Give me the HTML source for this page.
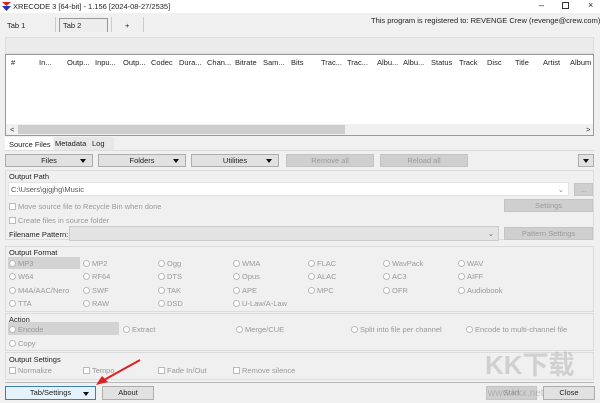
<!DOCTYPE html><html><head><style>
*{margin:0;padding:0;box-sizing:border-box}
body{width:600px;height:403px;background:#f0f0f0;font-family:"Liberation Sans",sans-serif;font-size:7.5px;color:#222;position:relative;overflow:hidden}
.a{position:absolute;white-space:nowrap}
.btn{position:absolute;background:#e1e1e1;border:1px solid #adadad;text-align:center;line-height:11px}
.dis{background:#cfcfcf;border-color:#c4c4c4;color:#9a9a9a}
.grp{position:absolute;border:1px solid #dcdcdc;left:5px;width:589px}
.r{display:inline-block;width:7px;height:7px;border:1px solid #bbb;border-radius:50%;background:#fff;vertical-align:-1px;margin-right:2px}
.c{display:inline-block;width:7px;height:7px;border:1px solid #bbb;background:#fff;vertical-align:-1px;margin-right:2px}
.g{color:#999}
.tri{display:inline-block;border-left:3.5px solid transparent;border-right:3.5px solid transparent;border-top:4px solid #111;vertical-align:1px}
</style></head><body>
<div class="a" style="left:0;top:0;width:600px;height:13px;background:#fff"></div>
<svg class="a" style="left:2px;top:2px" width="9" height="9"><path d="M0 0h9L4.5 4z" fill="#d22"/><path d="M0 4h9L4.5 9z" fill="#23b"/></svg>
<div class="a" style="left:13px;top:2px">XRECODE 3 [64-bit] - 1.156 [2024-08-27/2535]</div>
<div class="a" style="left:539px;top:0px;font-size:9px">–</div>
<div class="a" style="left:562px;top:2px;width:7px;height:7px;border:1px solid #333"></div>
<div class="a" style="left:588px;top:0px;font-size:9px">×</div>
<div class="a" style="left:0;top:13px;width:600px;height:22px;background:#f0f0f0"></div>
<div class="a" style="left:7px;top:21px">Tab 1</div>
<div class="a" style="left:55px;top:17px;width:1px;height:15px;background:#ccc"></div>
<div class="a" style="left:59px;top:18px;width:49px;height:14px;border:1px solid #999;border-bottom:none;background:#ededed;padding:2px 3px">Tab 2</div>
<div class="a" style="left:111px;top:17px;width:1px;height:15px;background:#ccc"></div>
<div class="a" style="left:125px;top:21px">+</div>
<div class="a" style="left:143px;top:17px;width:1px;height:15px;background:#ccc"></div>
<div class="a" style="left:371px;top:16px">This program is registered to: REVENGE Crew (revenge@crew.com)</div>
<div class="a" style="left:5px;top:37px;width:589px;height:17px;background:#ebebeb;border:1px solid #ddd"></div>
<div class="a" style="left:5px;top:54px;width:589px;height:82px;background:#fff;border:1px solid #999"></div>
<div class="a" style="left:11px;top:58px;word-spacing:0">#</div>
<div class="a" style="top:58px;left:0">
<span class="a" style="left:39px">In...</span><span class="a" style="left:67px">Outp...</span><span class="a" style="left:95px">Inpu...</span><span class="a" style="left:123px">Outp...</span><span class="a" style="left:151px">Codec</span><span class="a" style="left:179px">Dura...</span><span class="a" style="left:207px">Chan...</span><span class="a" style="left:235px">Bitrate</span><span class="a" style="left:263px">Sam...</span><span class="a" style="left:291px">Bits</span><span class="a" style="left:321px">Trac...</span><span class="a" style="left:347px">Trac...</span><span class="a" style="left:377px">Albu...</span><span class="a" style="left:403px">Albu...</span><span class="a" style="left:431px">Status</span><span class="a" style="left:459px">Track</span><span class="a" style="left:487px">Disc</span><span class="a" style="left:515px">Title</span><span class="a" style="left:543px">Artist</span><span class="a" style="left:570px">Album</span></div>
<div class="a" style="left:6px;top:124px;width:587px;height:11px;background:#f0f0f0"></div>
<div class="a" style="left:18px;top:125px;width:327px;height:9px;background:#cdcdcd"></div>
<div class="a" style="left:10px;top:125px">&lt;</div><div class="a" style="left:586px;top:125px">&gt;</div>
<div class="a" style="left:5px;top:137px;width:48px;height:14px;background:#fff"></div>
<div class="a" style="left:9px;top:140px">Source Files</div>
<div class="a" style="left:54px;top:137px;width:60px;height:13px;background:#e8e8e8"></div>
<div class="a" style="left:55px;top:139px">Metadata</div><div class="a" style="left:92px;top:139px">Log</div>
<div class="a" style="left:5px;top:150px;width:589px;height:1px;background:#ddd"></div>
<div class="btn" style="left:5px;top:154px;width:88px;height:13px">Files<span class="tri" style="position:absolute;right:6px;top:4px"></span></div>
<div class="btn" style="left:98px;top:154px;width:88px;height:13px">Folders<span class="tri" style="position:absolute;right:6px;top:4px"></span></div>
<div class="btn" style="left:191px;top:154px;width:88px;height:13px">Utilities<span class="tri" style="position:absolute;right:6px;top:4px"></span></div>
<div class="btn dis" style="left:286px;top:154px;width:88px;height:13px">Remove all</div>
<div class="btn dis" style="left:380px;top:154px;width:88px;height:13px">Reload all</div>
<div class="btn" style="left:578px;top:154px;width:16px;height:13px"><span class="tri" style="position:absolute;left:4px;top:4px"></span></div>
<div class="grp" style="top:170px;height:70px"></div>
<div class="a" style="left:9px;top:172px">Output Path</div>
<div class="a" style="left:8px;top:182px;width:561px;height:14px;background:#fff;border:1px solid #e2e2e2;padding:2px 2px;color:#555">C:\Users\gjgjhg\Music<span style="position:absolute;right:4px;color:#888">⌄</span></div>
<div class="btn dis" style="left:574px;top:183px;width:19px;height:13px">...</div>
<div class="a g" style="left:9px;top:202px"><span class="c"></span>Move source file to Recycle Bin when done</div>
<div class="btn dis" style="left:504px;top:199px;width:89px;height:13px">Settings</div>
<div class="a g" style="left:9px;top:216px"><span class="c"></span>Create files in source folder</div>
<div class="a" style="left:9px;top:230px">Filename Pattern:</div>
<div class="a" style="left:69px;top:226px;width:430px;height:15px;background:#e3e3e3;border:1px solid #ccc"><span style="position:absolute;right:4px;top:2px;color:#666">⌄</span></div>
<div class="btn dis" style="left:504px;top:227px;width:89px;height:13px">Pattern Settings</div>
<div class="grp" style="top:246px;height:66px"></div>
<div class="a" style="left:9px;top:248px">Output Format</div>
<div class="a" style="left:8px;top:257px;width:72px;height:12px;background:#d3d3d3"></div>
<div class="a g" style="top:259px;left:0">
<span class="a" style="left:9px"><span class="r"></span>MP3</span><span class="a" style="left:83px"><span class="r"></span>MP2</span><span class="a" style="left:158px"><span class="r"></span>Ogg</span><span class="a" style="left:233px"><span class="r"></span>WMA</span><span class="a" style="left:308px"><span class="r"></span>FLAC</span><span class="a" style="left:383px"><span class="r"></span>WavPack</span><span class="a" style="left:458px"><span class="r"></span>WAV</span></div>
<div class="a g" style="top:272px;left:0">
<span class="a" style="left:9px"><span class="r"></span>W64</span><span class="a" style="left:83px"><span class="r"></span>RF64</span><span class="a" style="left:158px"><span class="r"></span>DTS</span><span class="a" style="left:233px"><span class="r"></span>Opus</span><span class="a" style="left:308px"><span class="r"></span>ALAC</span><span class="a" style="left:383px"><span class="r"></span>AC3</span><span class="a" style="left:458px"><span class="r"></span>AIFF</span></div>
<div class="a g" style="top:286px;left:0">
<span class="a" style="left:9px"><span class="r"></span>M4A/AAC/Nero</span><span class="a" style="left:83px"><span class="r"></span>SWF</span><span class="a" style="left:158px"><span class="r"></span>TAK</span><span class="a" style="left:233px"><span class="r"></span>APE</span><span class="a" style="left:308px"><span class="r"></span>MPC</span><span class="a" style="left:383px"><span class="r"></span>OFR</span><span class="a" style="left:458px"><span class="r"></span>Audiobook</span></div>
<div class="a g" style="top:299px;left:0">
<span class="a" style="left:9px"><span class="r"></span>TTA</span><span class="a" style="left:83px"><span class="r"></span>RAW</span><span class="a" style="left:158px"><span class="r"></span>DSD</span><span class="a" style="left:233px"><span class="r"></span>U-Law/A-Law</span></div>
<div class="grp" style="top:313px;height:38px"></div>
<div class="a" style="left:9px;top:315px">Action</div>
<div class="a" style="left:8px;top:322px;width:111px;height:13px;background:#d3d3d3"></div>
<div class="a g" style="top:325px;left:0">
<span class="a" style="left:9px"><span class="r"></span>Encode</span><span class="a" style="left:123px"><span class="r"></span>Extract</span><span class="a" style="left:236px"><span class="r"></span>Merge/CUE</span><span class="a" style="left:351px"><span class="r"></span>Split into file per channel</span><span class="a" style="left:466px"><span class="r"></span>Encode to multi-channel file</span></div>
<div class="a g" style="left:9px;top:339px"><span class="r"></span>Copy</div>
<div class="grp" style="top:352px;height:28px"></div>
<div class="a" style="left:9px;top:355px">Output Settings</div>
<div class="a g" style="top:366px;left:0">
<span class="a" style="left:9px"><span class="c"></span>Normalize</span><span class="a" style="left:83px"><span class="c"></span>Tempo</span><span class="a" style="left:158px"><span class="c"></span>Fade In/Out</span><span class="a" style="left:233px"><span class="c"></span>Remove silence</span></div>
<div class="a" style="left:5px;top:382px;width:589px;height:1px;background:#bbb"></div>
<div class="btn" style="left:5px;top:386px;width:91px;height:14px;border-color:#3c7fb1;background:#e5f1fb">Tab/Settings<span class="tri" style="position:absolute;right:6px;top:5px"></span></div>
<div class="btn" style="left:102px;top:386px;width:52px;height:14px">About</div>
<div class="btn dis" style="left:486px;top:386px;width:51px;height:14px">Start</div>
<div class="btn" style="left:543px;top:386px;width:52px;height:14px">Close</div>
<svg class="a" style="left:0;top:0" width="600" height="403"><path d="M140 360L104 380" stroke="#e02020" stroke-width="2"/><path d="M96 385l6-9 6 6z" fill="#e02020"/></svg>
<div class="a" style="left:485px;top:345px;font-size:26px;color:rgba(150,150,150,.35);font-weight:bold;font-family:'Liberation Sans','Noto Sans CJK SC',sans-serif">KK下载</div>
<div class="a" style="left:488px;top:388px;font-size:10px;color:rgba(120,120,120,.35)">www.kkx.net</div>
</body></html>
